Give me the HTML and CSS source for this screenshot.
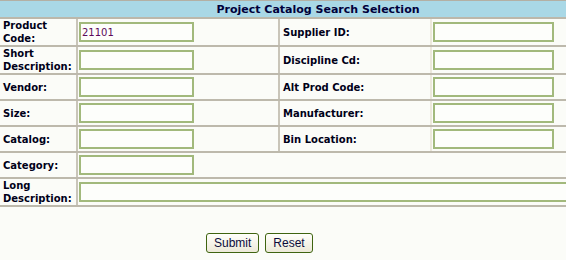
FILE: index.html
```html
<!DOCTYPE html>
<html>
<head>
    <title>Project Catalog Search Selection</title>
    <link rel="stylesheet" href="styles.css">
</head>
<body>
    <form class="search" method="post">
        <table class="grid">
            <colgroup>
                <col class="c-lbl">
                <col class="c-fld">
                <col class="c-lbl2">
                <col>
            </colgroup>
            <tr>
                <th colspan="4" class="title">Project Catalog Search Selection</th>
            </tr>
            <tr>
                <td class="lbl">Product Code:</td>
                <td class="fld"><input type="text" class="box" value="21101"></td>
                <td class="lbl lbl-r">Supplier ID:</td>
                <td class="fld fld-r"><input type="text" class="box box-r"></td>
            </tr>
            <tr>
                <td class="lbl">Short Description:</td>
                <td class="fld"><input type="text" class="box"></td>
                <td class="lbl lbl-r">Discipline Cd:</td>
                <td class="fld fld-r"><input type="text" class="box box-r"></td>
            </tr>
            <tr>
                <td class="lbl">Vendor:</td>
                <td class="fld"><input type="text" class="box"></td>
                <td class="lbl lbl-r">Alt Prod Code:</td>
                <td class="fld fld-r"><input type="text" class="box box-r"></td>
            </tr>
            <tr>
                <td class="lbl">Size:</td>
                <td class="fld"><input type="text" class="box"></td>
                <td class="lbl lbl-r">Manufacturer:</td>
                <td class="fld fld-r"><input type="text" class="box box-r"></td>
            </tr>
            <tr>
                <td class="lbl">Catalog:</td>
                <td class="fld"><input type="text" class="box"></td>
                <td class="lbl lbl-r">Bin Location:</td>
                <td class="fld fld-r"><input type="text" class="box box-r"></td>
            </tr>
            <tr>
                <td class="lbl">Category:</td>
                <td colspan="3" class="fld"><input type="text" class="box"></td>
            </tr>
            <tr>
                <td class="lbl">Long Description:</td>
                <td colspan="3" class="fld"><input type="text" class="box box-long"></td>
            </tr>
        </table>
        <div class="actions">
            <input type="submit" class="btn" value="Submit">
            <input type="reset" class="btn" value="Reset">
        </div>
    </form>
</body>
</html>
```

FILE: styles.css
```css
body {
    margin: 0;
    padding: 0;
    background-color: #fbfcf8;
    font-family: Verdana, "DejaVu Sans", sans-serif;
    overflow: hidden;
}
.search {
    width: 636px;
}
.grid {
    width: 636px;
    border-collapse: collapse;
    table-layout: fixed;
}
.c-lbl {
    width: 77px;
}
.c-fld {
    width: 202px;
}
.c-lbl2 {
    width: 152px;
}
.title {
    height: 16px;
    padding: 0;
    background-color: #a9d8e6;
    border-top: 1px solid #b3b0a4;
    border-bottom: 2px solid #bcb8ab;
    color: #00003a;
    font-size: 11px;
    font-weight: bold;
    text-align: center;
}
.lbl {
    padding: 0 3px;
    border-bottom: 2px solid #bdb9ac;
    border-right: 2px solid #c9c5b9;
    color: #000018;
    font-size: 10px;
    font-weight: bold;
    line-height: 13px;
    vertical-align: middle;
}
.lbl-r {
    border-left: 2px solid #c9c5b9;
    border-right: 2px solid #ece8dc;
}
.fld {
    height: 24px;
    padding: 0 0 0 1px;
    border-bottom: 2px solid #bdb9ac;
    vertical-align: middle;
}
.box {
    display: block;
    box-sizing: border-box;
    width: 115px;
    height: 20px;
    margin: 0;
    padding: 1px 0 1px 1px;
    border: 2px solid #a2b97c;
    background-color: #fdfefb;
    color: #5c0a5c;
    font-family: Verdana, "DejaVu Sans", sans-serif;
    font-size: 10px;
    outline: none;
}
.box-r {
    width: 121px;
}
.box-long {
    width: 540px;
}
.actions {
    padding: 26px 0 0 206px;
    display: flex;
    gap: 6px;
}
.btn {
    height: 20px;
    padding: 0 7px;
    border: 1px solid #3f6410;
    border-radius: 3px;
    background: linear-gradient(to bottom, #fffffb, #ece9d8);
    color: #0b0b3b;
    font-family: Tahoma, "Liberation Sans", sans-serif;
    font-size: 12px;
    cursor: pointer;
}
```
